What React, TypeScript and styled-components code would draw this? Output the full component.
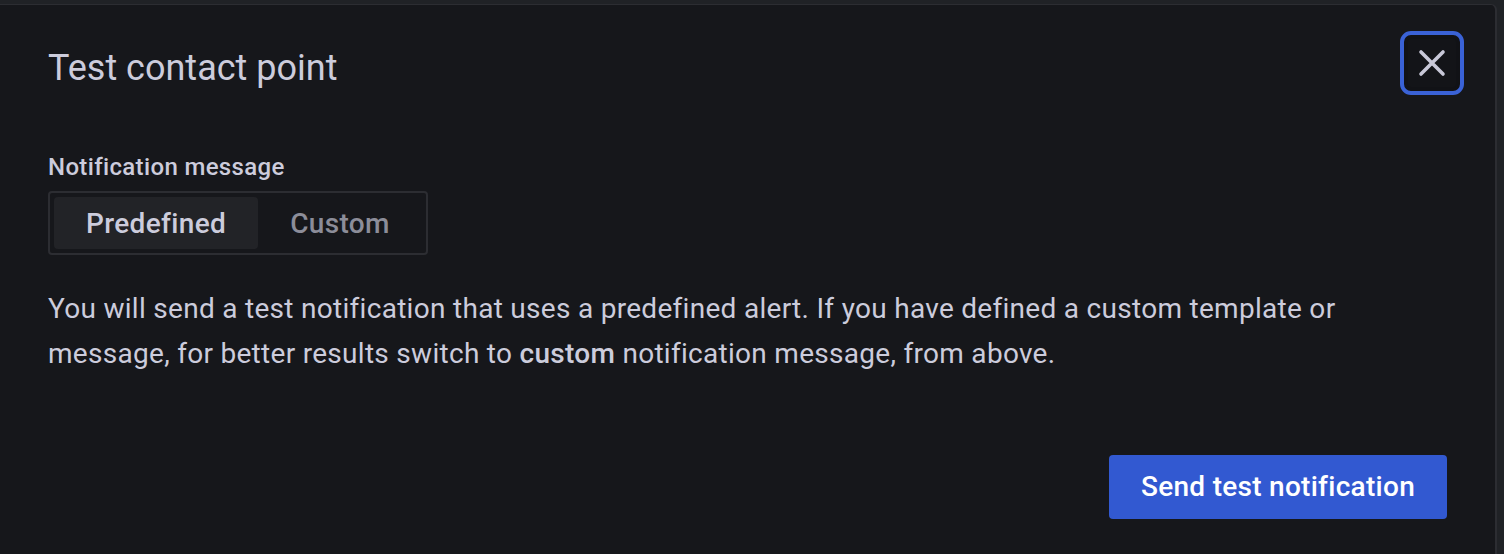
import React from "react";
import styled, { createGlobalStyle } from "styled-components";

const Global = createGlobalStyle`
  html, body {
    margin: 0;
    padding: 0;
    background: #202226;
    overflow: hidden;
    font-family: Roboto, "Liberation Sans", sans-serif;
  }
  * { box-sizing: border-box; }
`;

const Page = styled.div`
  padding: 4px 7px 0 0;
  height: 554px;
`;

const Modal = styled.div`
  background: #16171b;
  border-top: 1px solid #2c2d32;
  border-right: 2px solid #2c2d32;
  border-top-right-radius: 6px;
  min-height: 600px;
  display: flex;
  flex-direction: column;
`;

const Header = styled.div`
  display: flex;
  align-items: flex-start;
  justify-content: space-between;
  padding: 26px 31px 0 48px;
`;

const Title = styled.h1`
  margin: 16px 0 0;
  font-size: 36px;
  line-height: 1.2;
  font-weight: 400;
  color: #ccccdc;
`;

const CloseButton = styled.button`
  width: 64px;
  height: 64px;
  border: 4px solid #3a62d6;
  border-radius: 11px;
  background: #131418;
  box-shadow: inset 0 0 0 4px #111216;
  display: flex;
  align-items: center;
  justify-content: center;
  padding: 0;
  cursor: pointer;
`;

const Body = styled.div`
  padding: 57px 48px 0 48px;
  display: flex;
  flex-direction: column;
`;

const Label = styled.div`
  font-size: 24px;
  line-height: 30px;
  font-weight: 500;
  letter-spacing: 0.35px;
  color: #ccccdc;
  margin-bottom: 9px;
`;

const RadioGroup = styled.div`
  display: inline-flex;
  align-self: flex-start;
  border: 2px solid #2c2d32;
  border-radius: 4px;
  padding: 4px;
  height: 64px;
`;

const RadioItem = styled.div<{ $active?: boolean }>`
  height: 52px;
  display: flex;
  align-items: center;
  padding: 0 32px;
  border-radius: 4px;
  font-size: 28px;
  font-weight: 500;
  letter-spacing: 0.35px;
  color: ${(p) => (p.$active ? "#ccccdc" : "#8c8d99")};
  background: ${(p) => (p.$active ? "#222327" : "transparent")};
`;

const Paragraph = styled.p`
  margin: 32px 0 0;
  font-size: 28px;
  line-height: 1.6;
  letter-spacing: 0.29px;
  color: #ccccdc;
  max-width: 1330px;
  strong { font-weight: 500; }
`;

const Footer = styled.div`
  display: flex;
  justify-content: flex-end;
  padding: 78px 48px 0 48px;
`;

const PrimaryButton = styled.button`
  height: 64px;
  padding: 0 32px;
  border: none;
  border-radius: 4px;
  background: #3259d1;
  color: #ffffff;
  font-family: Roboto, "Liberation Sans", sans-serif;
  font-size: 28px;
  font-weight: 500;
  letter-spacing: 0.28px;
  cursor: pointer;
`;

export default function App() {
  return (
    <>
      <Global />
      <Page>
        <Modal>
          <Header>
            <Title>Test contact point</Title>
            <CloseButton aria-label="Close">
              <svg width="28" height="28" viewBox="0 0 28 28">
                <path
                  d="M3 3 L25 25 M25 3 L3 25"
                  stroke="#c8c8d8"
                  strokeWidth="3.6"
                  strokeLinecap="round"
                  fill="none"
                />
              </svg>
            </CloseButton>
          </Header>
          <Body>
            <Label>Notification message</Label>
            <RadioGroup>
              <RadioItem $active>Predefined</RadioItem>
              <RadioItem>Custom</RadioItem>
            </RadioGroup>
            <Paragraph>
              You will send a test notification that uses a predefined alert. If you have defined a custom template or
              message, for better results switch to <strong>custom</strong> notification message, from above.
            </Paragraph>
          </Body>
          <Footer>
            <PrimaryButton>Send test notification</PrimaryButton>
          </Footer>
        </Modal>
      </Page>
    </>
  );
}
